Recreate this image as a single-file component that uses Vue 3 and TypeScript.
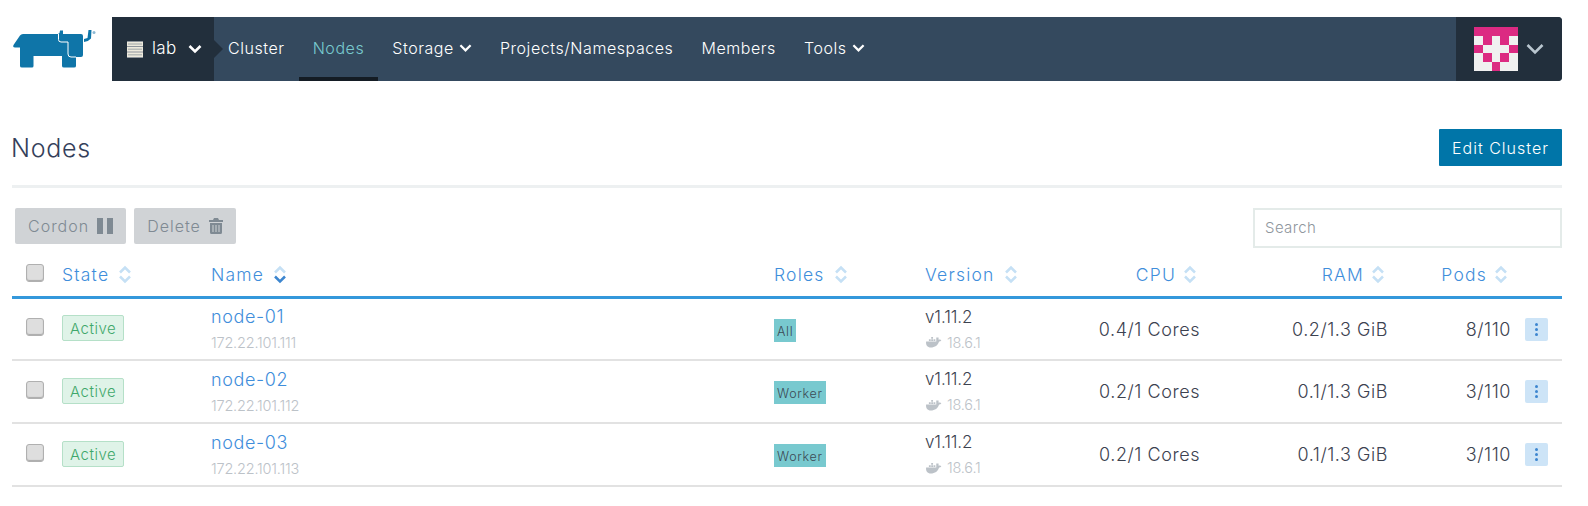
<script setup lang="ts">
interface Node { name: string; ip: string; role: string; cpu: string; ram: string; pods: string }
const nodes: Node[] = [
  { name: 'node-01', ip: '172.22.101.111', role: 'All', cpu: '0.4/1 Cores', ram: '0.2/1.3 GiB', pods: '8/110' },
  { name: 'node-02', ip: '172.22.101.112', role: 'Worker', cpu: '0.2/1 Cores', ram: '0.1/1.3 GiB', pods: '3/110' },
  { name: 'node-03', ip: '172.22.101.113', role: 'Worker', cpu: '0.2/1 Cores', ram: '0.1/1.3 GiB', pods: '3/110' },
]
const avatar = [1,1,1,1,1, 0,1,0,1,0, 1,0,0,0,1, 0,1,0,1,0, 0,0,1,0,0]
const headers = [
  { label: 'State', cls: 'c-state', active: false },
  { label: 'Name', cls: 'c-name', active: true },
  { label: 'Roles', cls: 'c-roles', active: false },
  { label: 'Version', cls: 'c-version', active: false },
  { label: 'CPU', cls: 'c-cpu', active: false },
  { label: 'RAM', cls: 'c-ram', active: false },
  { label: 'Pods', cls: 'c-pods', active: false },
]
</script>

<template>
  <div class="page">
    <header class="top">
      <svg class="logo" viewBox="13 29 84 40" width="84" height="40">
        <path fill="#0f75a8" d="M13.500 45 L20 35.500 Q21 34 23 34 L58 34 L59.500 33 L60 30.500 L63 30.500 L63 34 L81 34 Q83 34 83 36 L83 55 Q83 57 81 57 L76 57 L76 66 Q76 67.500 74 67.500 L64 67.500 Q62 67.500 62 66 L62 56 L33.500 56 L33.500 66 Q33.500 67.500 32 67.500 L22 67.500 Q20 67.500 20 66 L20 47.500 L15 47.500 Q12.500 47.500 13.500 45 Z"/>
        <path fill="none" stroke="#fff" stroke-width="1" d="M58.500 34 L58.500 39.500 Q58.500 42 61 42 L68 42 L68 54 Q68 57 71 57 L76 57"/>
        <path fill="#0f75a8" d="M84 39 L87.500 38 L88.500 30 L91.500 30 L91 38.500 Q88.500 41.500 84 42 Z"/>
        <circle cx="94" cy="32.500" r="1.500" fill="#8cb9d4"/>
      </svg>
      <nav class="nav">
        <div class="cluster">
          <svg class="server" viewBox="0 0 16 17" width="16" height="17">
            <rect x="0" y="0" width="16" height="17" fill="#ece9dc"/>
            <path d="M0 .5h16M0 5.500h16M0 11h16M0 16.500h16" stroke="#8d949b" stroke-width="1.200"/>
            <path d="M1 3h14M1 8.300h14M1 13.800h14" stroke="#b8bcb8" stroke-width="1.500"/>
          </svg>
          <span class="lab">lab</span>
          <svg class="chev" viewBox="0 0 14 10" width="14" height="10"><path d="M1.500 2 L7 7.500 L12.500 2" fill="none" stroke="#fff" stroke-width="2.600"/></svg>
        </div>
        <i class="arrow"></i>
        <a class="item">Cluster</a>
        <a class="item on">Nodes</a>
        <a class="item">Storage <svg class="chev" viewBox="0 0 14 10" width="13" height="10"><path d="M1.500 2 L7 7.500 L12.500 2" fill="none" stroke="#fff" stroke-width="2.400"/></svg></a>
        <a class="item">Projects/Namespaces</a>
        <a class="item">Members</a>
        <a class="item">Tools <svg class="chev" viewBox="0 0 14 10" width="13" height="10"><path d="M1.500 2 L7 7.500 L12.500 2" fill="none" stroke="#fff" stroke-width="2.400"/></svg></a>
        <div class="user">
          <div class="avatar"><span v-for="(c, i) in avatar" :key="i" :class="{ pk: c === 1 }"></span></div>
          <svg viewBox="0 0 18 12" width="18" height="12"><path d="M1.500 2 L9 9.500 L16.500 2" fill="none" stroke="#b9c6cf" stroke-width="2.600"/></svg>
        </div>
      </nav>
    </header>

    <section class="title">
      <h1>Nodes</h1>
      <button class="edit">Edit Cluster</button>
    </section>

    <section class="tools">
      <button class="act">Cordon
        <svg viewBox="0 0 16 16" width="16" height="16"><path fill="#7f8a93" d="M0 0h6v16H0zM10 0h6v16h-6z"/></svg>
      </button>
      <button class="act">Delete
        <svg viewBox="0 0 14 16" width="14" height="16"><path fill="#7f8a93" d="M5 0h4l1 2h4v2H0V2h4zM1 5h12v9.500q0 1.500-1.500 1.500h-9Q1 16 1 14.500zM3.500 7v7h1V7zm3 0v7h1V7zm3 0v7h1V7z"/></svg>
      </button>
      <div class="search">Search</div>
    </section>

    <div class="row head">
      <div class="c-check"><span class="box"></span></div>
      <div v-for="h in headers" :key="h.label" :class="h.cls">
        {{ h.label }}
        <svg class="sort" viewBox="0 0 14 18" width="14" height="19">
          <path d="M2 7 L7 2 L12 7" fill="none" stroke="#c5e0f5" stroke-width="2.500"/>
          <path d="M2 11 L7 16 L12 11" fill="none" :stroke="h.active ? '#3d86cf' : '#c5e0f5'" stroke-width="2.500"/>
        </svg>
      </div>
      <div class="c-act"></div>
    </div>

    <div v-for="n in nodes" :key="n.name" class="row body">
      <div class="c-check"><span class="box"></span></div>
      <div class="c-state"><span class="badge">Active</span></div>
      <div class="c-name">
        <a class="nm">{{ n.name }}</a>
        <div class="sub">{{ n.ip }}</div>
      </div>
      <div class="c-roles"><span class="role">{{ n.role }}</span></div>
      <div class="c-version">
        <div class="ver">v1.11.2</div>
        <div class="sub dock">
          <svg viewBox="0 0 18 13" width="17" height="12"><path fill="#bcc2c8" d="M1 6h11V1.500h2.500V4c1-.5 2.300-.5 3 .5-.5 1-1.500 1.500-2.500 1.500C14 10 10.500 12.500 6 12.500 2.500 12.500.5 10 1 6zM4 3.500h2V5.500H4zM6.500 3.500h2V5.500h-2zM9 3.500h2V5.500H9zM6.500 1h2v2h-2z"/></svg>
          18.6.1
        </div>
      </div>
      <div class="c-cpu">{{ n.cpu }}</div>
      <div class="c-ram">{{ n.ram }}</div>
      <div class="c-pods">{{ n.pods }}</div>
      <div class="c-act"><span class="dots"><i></i><i></i><i></i></span></div>
    </div>
  </div>
</template>

<style>
html, body { margin: 0; background: #fff; }
</style>

<style scoped>
.page { width: 1588px; height: 506px; overflow: hidden; font-family: "Inter", "Liberation Sans", sans-serif; font-weight: 300; color: #3c4250; box-sizing: border-box; padding: 17px 26px 0 12px; }
.top { display: flex; align-items: center; height: 64px; }
.logo { margin: 0 15px 0 1px; overflow: visible; flex: none; }
.nav { flex: 1; height: 64px; display: flex; align-items: center; background: #34495e; color: #fff; border-radius: 0 4px 4px 0; position: relative; font-size: 16px; }
.cluster { width: 102px; height: 64px; flex: none; background: #222f3c; display: flex; align-items: center; box-sizing: border-box; padding-left: 15px; }
.server { margin-right: 9px; }
.lab { margin-right: 11px; font-size: 17px; letter-spacing: .4px; padding-bottom: 2px; }
.arrow { width: 0; height: 0; border-left: 9px solid #222f3c; border-top: 9px solid transparent; border-bottom: 9px solid transparent; flex: none; }
.item { height: 64px; display: flex; align-items: center; gap: 5px; padding: 0 14px 2px; box-sizing: border-box; border-bottom: 4px solid transparent; border-top: 4px solid transparent; white-space: nowrap; letter-spacing: .56px; }
.arrow + .item { padding-left: 5px; }
.item.on { color: #78c9cf; border-bottom-color: #141c24; padding-left: 14px; padding-right: 14px; }
.user { margin-left: auto; width: 106px; height: 64px; background: #222f3c; border-radius: 0 4px 4px 0; display: flex; align-items: center; box-sizing: border-box; padding-left: 18px; gap: 8px; }
.avatar { width: 44px; height: 44px; display: grid; grid-template-columns: repeat(5, 1fr); grid-template-rows: repeat(5, 1fr); background: #f0f0f0; }
.pk { background: #dc2a82; }
.title { display: flex; justify-content: space-between; align-items: flex-start; margin-top: 48px; height: 56px; border-bottom: 3px solid #edf0f1; }
h1 { margin: 0; font-size: 25px; font-weight: 300; line-height: 38px; letter-spacing: .7px; color: #34405a; margin-left: -1px; }
.edit { width: 123px; height: 37px; background: #0075a8; color: #fff; border: 0; font: inherit; font-size: 16px; letter-spacing: 1px; border-radius: 1px; }
.tools { display: flex; align-items: flex-start; gap: 8px; padding: 20px 0 0 3px; height: 50px; }
.act { height: 36px; padding: 0 13px 0 13px; background: #d0d3d6; color: #7f8a93; border: 0; border-radius: 2px; font: inherit; font-size: 16px; letter-spacing: 1px; display: flex; align-items: center; gap: 8px; }
.search { margin-left: auto; width: 309px; height: 40px; box-sizing: border-box; border: 2px solid #e4ebe9; padding: 0 10px; line-height: 35px; font-size: 15px; color: #8f969d; letter-spacing: .4px; }
.row { display: grid; grid-template-columns: 50px 149px 563px 151px 135px 140px 188px 123px 51px; align-items: center; }
.head { height: 35px; margin-top: 3px; padding-bottom: 0; border-bottom: 3px solid #3498db; color: #3f8edb; font-size: 17.500px; letter-spacing: 1.2px; }
.head > div { display: flex; align-items: center; gap: 9px; padding-bottom: 8px; }
.head > .c-check { padding-bottom: 12px; }
.head .c-cpu, .head .c-ram, .head .c-pods { justify-content: flex-end; padding-right: 3px; gap: 7px; }
.body { height: 61px; border-bottom: 2px solid #e2e2e2; font-size: 18px; letter-spacing: .55px; }
.head + .body { height: 60px; }
.c-check { padding-left: 14px; }
.body .c-check { padding-bottom: 4px; }
.body .c-state { padding-bottom: 2px; }
.box { display: block; width: 18px; height: 18px; box-sizing: border-box; background: #dedede; border: 1px solid #b0b0b0; border-radius: 3px; box-shadow: inset 0 -1px 1px #aaa; }
.badge { display: inline-block; height: 26px; line-height: 25px; box-sizing: border-box; padding: 0 7px; background: #dff3e8; border: 1px solid #b5e0c8; border-radius: 2px; color: #3fa86b; font-size: 15px; letter-spacing: .5px; }
.body .c-name, .body .c-version { padding-bottom: 1px; }
.nm { color: #3f8edb; font-size: 18px; letter-spacing: .6px; }
.sub { color: #bcc2c8; font-size: 14.500px; margin-top: 7px; letter-spacing: -.2px; }
.dock { display: flex; align-items: center; gap: 5px; }
.role { display: inline-block; height: 23px; line-height: 25px; padding: 0 3px; background: #78c9cf; color: #3c4a55; font-size: 12.500px; letter-spacing: .7px; vertical-align: middle; margin-top: 2px; }
.ver { font-size: 17px; letter-spacing: -.1px; }
.c-cpu, .c-ram, .c-pods { text-align: right; }
.c-act { padding-left: 14px; }
.dots { width: 23px; height: 23px; background: #cde4f7; border-radius: 2px; display: flex; flex-direction: column; align-items: center; justify-content: center; gap: 2px; }
.dots i { width: 3px; height: 3px; background: #3d86cf; border-radius: 50%; }
</style>
